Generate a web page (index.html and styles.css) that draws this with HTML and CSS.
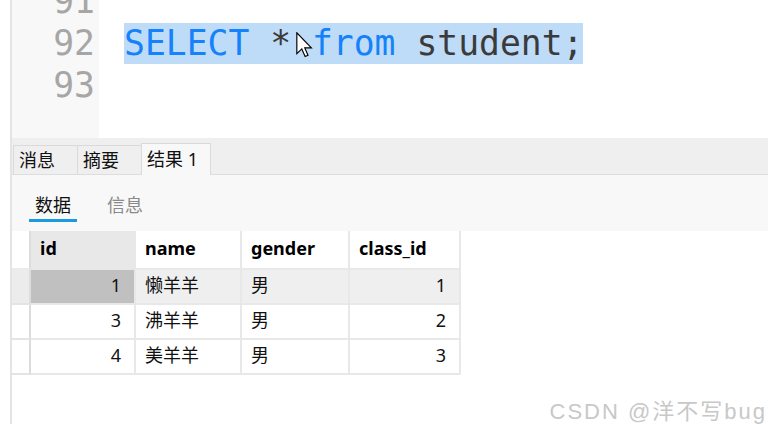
FILE: index.html
```html
<!DOCTYPE html>
<html lang="zh">
<head>
<meta charset="utf-8">
<title>查询结果</title>
<link rel="stylesheet" href="styles.css">
</head>
<body>
<div class="app">
  <div class="editor">
    <div class="gutter">
      <div class="ln">91</div>
      <div class="ln">92</div>
      <div class="ln">93</div>
    </div>
    <div class="code">
      <div class="ln"></div>
      <div class="ln"><span class="sel"><span class="kw">SELECT</span> * <span class="kw">from</span> student;</span></div>
      <div class="ln"></div>
    </div>
  </div>
  <div class="tabbar">
    <div class="tab">消息</div>
    <div class="tab">摘要</div>
    <div class="tab active">结果 1</div>
  </div>
  <div class="subtabs">
    <div class="subtab on">数据</div>
    <div class="subtab">信息</div>
  </div>
  <div class="grid">
    <div class="row head">
      <div class="cell rh"></div>
      <div class="cell c1 hl">id</div>
      <div class="cell c2">name</div>
      <div class="cell c3">gender</div>
      <div class="cell c4">class_id</div>
    </div>
    <div class="row cur">
      <div class="cell rh"></div>
      <div class="cell c1 num focus">1</div>
      <div class="cell c2">懒羊羊</div>
      <div class="cell c3">男</div>
      <div class="cell c4 num">1</div>
    </div>
    <div class="row">
      <div class="cell rh"></div>
      <div class="cell c1 num">3</div>
      <div class="cell c2">沸羊羊</div>
      <div class="cell c3">男</div>
      <div class="cell c4 num">2</div>
    </div>
    <div class="row">
      <div class="cell rh"></div>
      <div class="cell c1 num">4</div>
      <div class="cell c2">美羊羊</div>
      <div class="cell c3">男</div>
      <div class="cell c4 num">3</div>
    </div>
  </div>
</div>
<svg class="cursor" width="17" height="26" viewBox="0 0 13 20" aria-hidden="true">
  <path d="M0.6 0.6 L0.6 16.6 L4.4 13 L7 18.9 L9.2 17.9 L6.7 12.2 L11.8 12.2 Z" fill="#fff" stroke="#000" stroke-width="0.9" stroke-linejoin="miter"/>
</svg>
<div class="watermark">CSDN @洋不写bug</div>
</body>
</html>
```
FILE: styles.css
```css
html, body {
  margin: 0;
  padding: 0;
}
body {
  width: 768px;
  height: 424px;
  overflow: hidden;
  background: #ffffff;
  position: relative;
  font-family: "Noto Sans", "Noto Sans CJK SC", sans-serif;
  color: #111;
}
.app {
  margin-left: 10px;
  border-left: 2px solid #e4e4e4;
  height: 424px;
  display: flex;
  flex-direction: column;
}
.editor {
  height: 138px;
  flex: none;
  display: flex;
  overflow: hidden;
  font-family: "DejaVu Sans Mono", monospace;
  font-size: 34.7px;
}
.editor .ln {
  height: 42px;
  line-height: 42px;
  white-space: pre;
}
.gutter {
  width: 87px;
  background: #f8f8f8;
  color: #a6a6a6;
  text-align: right;
  padding-right: 4px;
  box-sizing: border-box;
  margin-top: -20px;
}
.code {
  padding-left: 25px;
  margin-top: -20px;
  color: #3b3b3b;
}
.sel {
  background: #bedcf8;
  display: inline-block;
  line-height: 41px;
}
.kw {
  color: #1581fa;
}
.tabbar {
  height: 36px;
  flex: none;
  background: #efefef;
  border-bottom: 1px solid #dddddd;
  display: flex;
  align-items: flex-end;
  padding-left: 1px;
}
.tab {
  width: 65px;
  height: 29px;
  box-sizing: border-box;
  border: 1px solid #dadada;
  border-bottom: none;
  margin-right: -1px;
  font-size: 18px;
  line-height: 29px;
  padding-left: 5px;
  color: #111;
}
.tab.active {
  width: 70px;
  height: 32px;
  line-height: 31px;
  background: #f8f8f8;
  margin-bottom: -1px;
}
.subtabs {
  height: 56px;
  flex: none;
  background: #f8f8f8;
  display: flex;
  align-items: flex-start;
  padding-left: 17px;
  padding-top: 17px;
  box-sizing: border-box;
  gap: 24px;
}
.subtab {
  font-size: 18px;
  line-height: 27px;
  padding: 0 6px;
  border-bottom: 3px solid transparent;
  color: #8a8a8a;
}
.subtab.on {
  color: #111;
  border-bottom-color: #1a9be0;
}
.grid {
  flex: 1;
  background: #ffffff;
}
.row {
  display: flex;
  height: 35px;
}
.row.head {
  height: 39px;
}
.cell {
  box-sizing: border-box;
  border-right: 2px solid #e8e8e8;
  border-bottom: 2px solid #e8e8e8;
  font-size: 18px;
  line-height: 31px;
  padding: 0 9px;
  white-space: nowrap;
  overflow: hidden;
}
.head .cell {
  font-weight: 700;
  line-height: 35px;
  color: #000;
}
.rh {
  width: 19px;
  padding: 0;
  border-right-color: #dcdcdc;
  border-bottom-color: #e4e4e4;
}
.head .rh {
  border-bottom-color: #ebebeb;
}
.c1 { width: 105px; }
.c2 { width: 106px; }
.c3 { width: 108px; }
.c4 { width: 111px; }
.num {
  text-align: right;
  padding-right: 13px;
}
.hl {
  background: #e8e8e8;
}
.cur .cell {
  background: #efefef;
}
.cur .rh {
  background: #ececec;
}
.cur .focus {
  background: #c0c0c0;
}
.cursor {
  position: absolute;
  left: 296px;
  top: 32px;
}
.watermark {
  position: absolute;
  right: 1px;
  top: 393px;
  font-family: "Liberation Sans", "Noto Sans CJK SC", sans-serif;
  font-size: 22px;
  letter-spacing: 2px;
  color: #c8c8c8;
  white-space: nowrap;
}
```
